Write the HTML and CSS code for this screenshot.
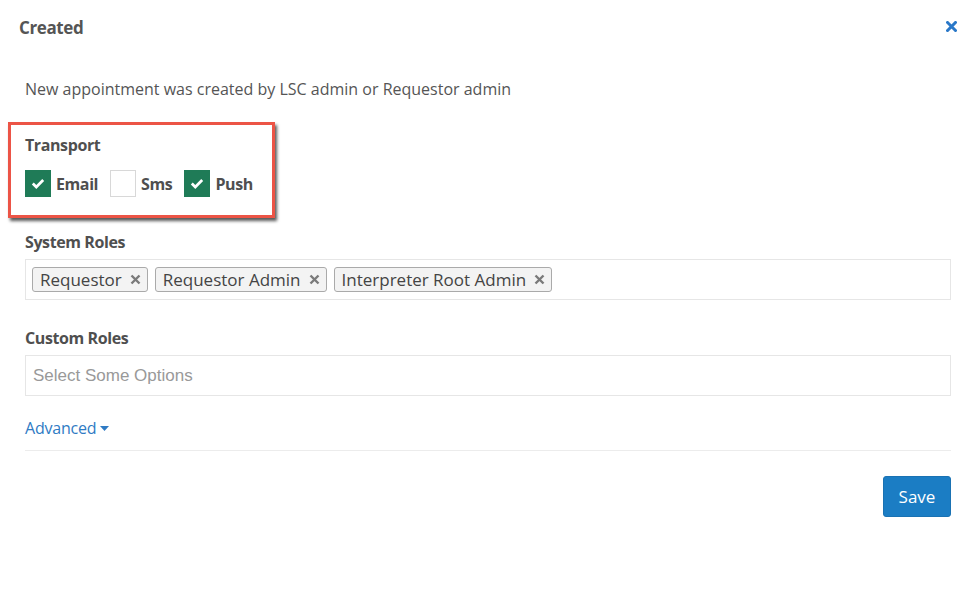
FILE: index.html
```html
<!DOCTYPE html>
<html lang="en-US">
<head>
   <meta charset="UTF-8">
   <meta name="viewport" content="width=device-width, initial-scale=1.0">
   <title>Created</title>
   <link rel="stylesheet" href="styles.css">
</head>
<body>
   <div class="modal">
      <header class="modal-header">
         <h4 class="modal-title">Created</h4>
         <span class="close-btn">
            <svg width="11" height="11" viewBox="0 0 11 11"><path d="M1.5 1.5 L9.5 9.5 M9.5 1.5 L1.5 9.5" stroke="#2a78c8" stroke-width="3" stroke-linecap="square"/></svg>
         </span>
      </header>
      <div class="modal-body">
         <p class="description">New appointment was created by LSC admin or Requestor admin</p>

         <div class="transport-box">
            <label class="field-label">Transport</label>
            <div class="check-row">
               <span class="check-item">
                  <span class="checkbox checked">
                     <svg width="14" height="11" viewBox="0 0 14 11"><path d="M1.8 5.5 L5.3 9 L12.2 2" fill="none" stroke="#fff" stroke-width="2.7"/></svg>
                  </span>
                  Email
               </span>
               <span class="check-item">
                  <span class="checkbox"></span>
                  Sms
               </span>
               <span class="check-item">
                  <span class="checkbox checked">
                     <svg width="14" height="11" viewBox="0 0 14 11"><path d="M1.8 5.5 L5.3 9 L12.2 2" fill="none" stroke="#fff" stroke-width="2.7"/></svg>
                  </span>
                  Push
               </span>
            </div>
         </div>

         <div class="field">
            <label class="field-label">System Roles</label>
            <div class="select-box">
               <span class="tag">Requestor <svg class="tag-x" width="11" height="11" viewBox="0 0 11 11"><path d="M1.5 1.5 L9.5 9.5 M9.5 1.5 L1.5 9.5" stroke="#7a7a7a" stroke-width="2.4"/></svg></span>
               <span class="tag">Requestor Admin <svg class="tag-x" width="11" height="11" viewBox="0 0 11 11"><path d="M1.5 1.5 L9.5 9.5 M9.5 1.5 L1.5 9.5" stroke="#7a7a7a" stroke-width="2.4"/></svg></span>
               <span class="tag">Interpreter Root Admin <svg class="tag-x" width="11" height="11" viewBox="0 0 11 11"><path d="M1.5 1.5 L9.5 9.5 M9.5 1.5 L1.5 9.5" stroke="#7a7a7a" stroke-width="2.4"/></svg></span>
            </div>
         </div>

         <div class="field custom-field">
            <label class="field-label">Custom Roles</label>
            <div class="select-box">
               <span class="placeholder">Select Some Options</span>
            </div>
         </div>

         <a class="advanced-link">Advanced <svg width="9" height="5" viewBox="0 0 9 5"><path d="M0 0 L9 0 L4.5 5 Z" fill="#2f7bc4"/></svg></a>
      </div>
      <footer class="modal-footer">
         <button class="save-btn">Save</button>
      </footer>
   </div>
</body>
</html>
```

FILE: styles.css
```css
:root {
   --text-color: #555;
   --label-color: #4f4f4f;
   --blue: #1b7dc4;
   --link-blue: #2f7bc4;
   --green: #1f7b57;
   --line: #e6e6e6;
}
* {
   box-sizing: border-box;
}
body {
   margin: 0;
   padding: 0;
   background: #fff;
   font-family: "Open Sans", "Noto Sans", sans-serif;
   color: var(--text-color);
}
.modal {
   width: 975px;
}
.modal-header {
   display: flex;
   justify-content: space-between;
   align-items: center;
   padding: 14px 18px 0 19px;
   height: 40px;
}
.modal-title {
   margin: 0;
   font-size: 17px;
   font-weight: 700;
   color: #555;
   letter-spacing: -0.4px;
}
.close-btn {
   display: flex;
   margin-top: -2px;
}
.modal-body {
   padding: 0 24px 0 25px;
}
.description {
   margin: 38px 0 0 0;
   font-size: 16px;
   line-height: 22px;
}
.field-label {
   display: block;
   font-size: 16px;
   font-weight: 700;
   line-height: 20px;
   color: var(--label-color);
   letter-spacing: -0.4px;
}
/* red highlight box from the screenshot */
.transport-box {
   display: inline-block;
   width: 267px;
   margin: 22px 0 0 -17px;
   padding: 10px 0 18px 14px;
   border: 3px solid #ec5446;
   box-shadow: 2px 3px 3px rgba(0, 0, 0, 0.65);
}
.check-row {
   display: flex;
   margin-top: 15px;
   gap: 12px;
}
.check-item {
   display: flex;
   align-items: center;
   gap: 5px;
   font-size: 16px;
   font-weight: 700;
   color: var(--label-color);
   letter-spacing: -0.4px;
}
.checkbox {
   display: flex;
   align-items: center;
   justify-content: center;
   width: 26px;
   height: 27px;
   border: 1px solid #d8d8d8;
   background: #fff;
}
.checkbox.checked {
   background: var(--green);
   border-color: var(--green);
}
.field {
   margin-top: 14px;
}
.custom-field {
   margin-top: 28px;
}
.select-box {
   display: flex;
   align-items: center;
   gap: 7px;
   height: 41px;
   margin-top: 7px;
   padding: 0 6px;
   border: 1px solid var(--line);
}
.tag {
   display: flex;
   align-items: center;
   gap: 8px;
   height: 25px;
   padding: 0 6px 0 7px;
   background: #f3f3f3;
   border: 1px solid #aaa;
   border-radius: 3px;
   font-size: 17px;
   color: #444;
}
.placeholder {
   font-family: "Liberation Sans", Arial, sans-serif;
   font-size: 17px;
   color: #999;
   padding-left: 1px;
}
.advanced-link {
   display: inline-flex;
   align-items: center;
   gap: 4px;
   margin-top: 21px;
   font-size: 16px;
   line-height: 22px;
   color: var(--link-blue);
   letter-spacing: -0.2px;
}
.modal-footer {
   display: flex;
   justify-content: flex-end;
   margin: 11px 24px 0 25px;
   padding-top: 25px;
   border-top: 1px solid #ececec;
}
.save-btn {
   width: 68px;
   height: 41px;
   border: 1px solid #1a72b3;
   border-radius: 3px;
   background: var(--blue);
   color: #fff;
   font-family: "Open Sans", "Noto Sans", sans-serif;
   font-size: 17px;
}
```
